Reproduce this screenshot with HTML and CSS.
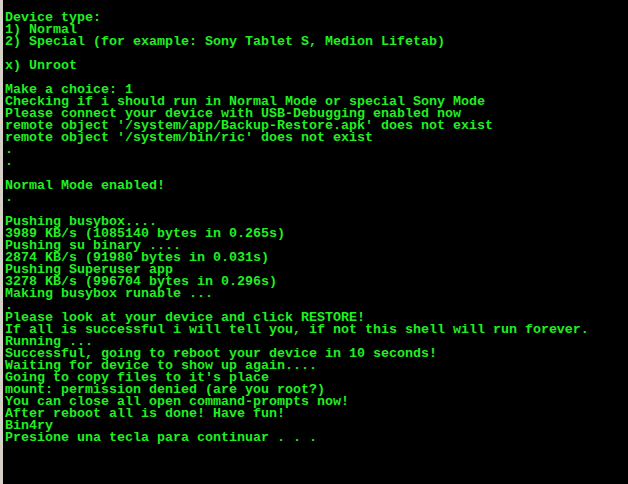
FILE: index.html
```html
<!DOCTYPE html>
<html>
<head>
<meta charset="utf-8">
<link rel="stylesheet" href="styles.css">
</head>
<body>
<div class="console">
<pre class="output">Device type:
1) Normal
2) Special (for example: Sony Tablet S, Medion Lifetab)

x) Unroot

Make a choice: 1
Checking if i should run in Normal Mode or special Sony Mode
Please connect your device with USB-Debugging enabled now
remote object '/system/app/Backup-Restore.apk' does not exist
remote object '/system/bin/ric' does not exist
.
.

Normal Mode enabled!
.

Pushing busybox....
3989 KB/s (1085140 bytes in 0.265s)
Pushing su binary ....
2874 KB/s (91980 bytes in 0.031s)
Pushing Superuser app
3278 KB/s (996704 bytes in 0.296s)
Making busybox runable ...
.
Please look at your device and click RESTORE!
If all is successful i will tell you, if not this shell will run forever.
Running ...
Successful, going to reboot your device in 10 seconds!
Waiting for device to show up again....
Going to copy files to it's place
mount: permission denied (are you root?)
You can close all open command-prompts now!
After reboot all is done! Have fun!
Bin4ry
Presione una tecla para continuar . . .</pre>
</div>
</body>
</html>
```

FILE: styles.css
```css
html, body {
  margin: 0;
  padding: 0;
  background: #000;
  height: 100%;
}

.console {
  height: 100%;
  box-sizing: border-box;
  border-left: 3px solid #d4d0c8;
  background: #000;
  padding: 12px 0 0 2px;
}

.output {
  margin: 0;
  font-family: "Liberation Mono", "DejaVu Sans Mono", monospace;
  font-size: 13.33px;
  font-weight: bold;
  line-height: 12px;
  color: #22ee22;
  white-space: pre;
}
```
